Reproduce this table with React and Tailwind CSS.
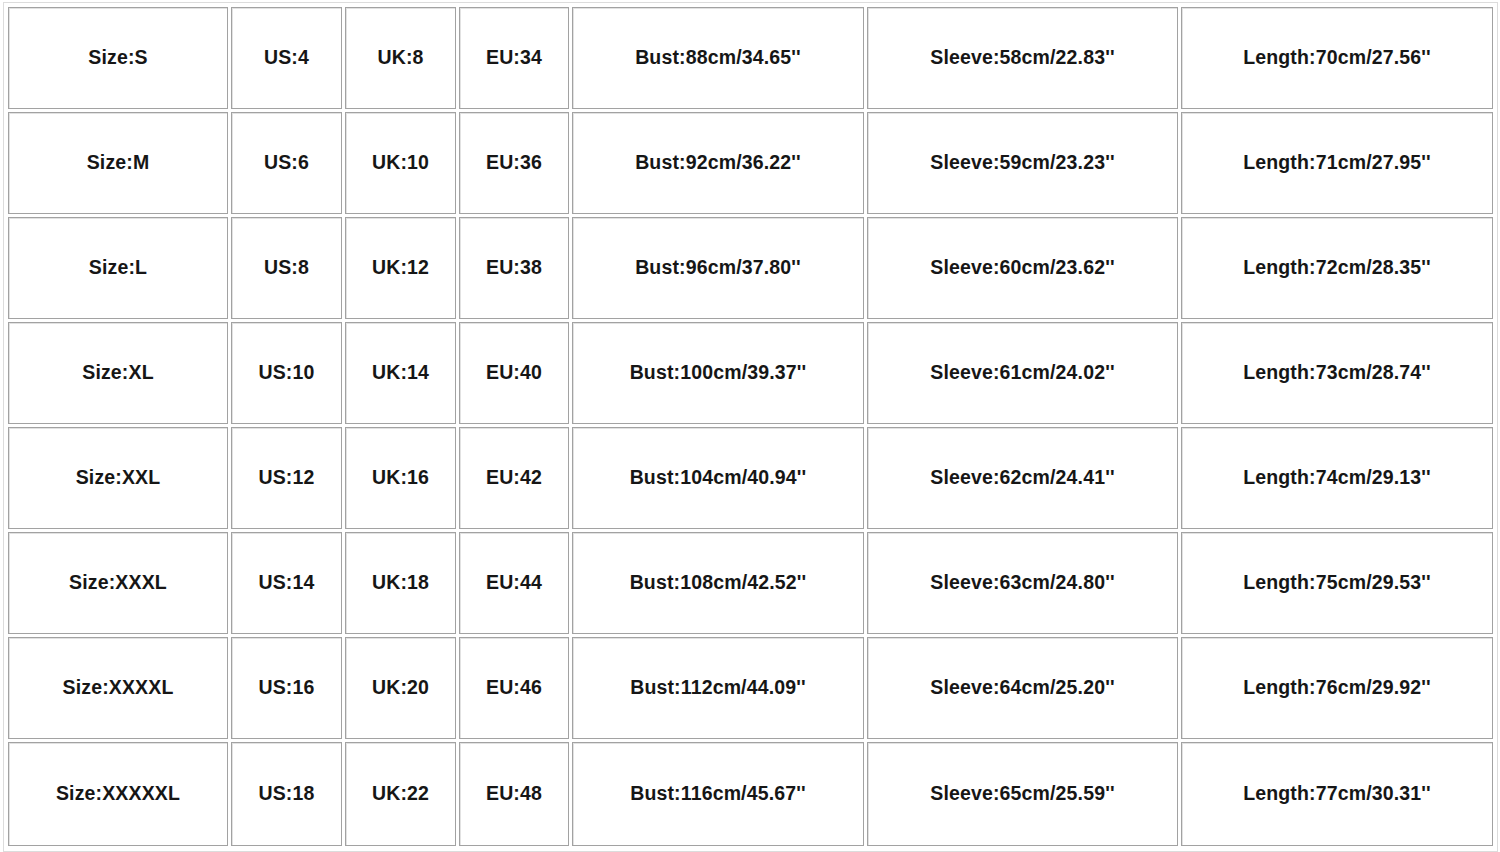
import React from "react";

// size chart rows: size, us, uk, eu, bust, sleeve, length
const rows = [
  ["Size:S", "US:4", "UK:8", "EU:34", "Bust:88cm/34.65''", "Sleeve:58cm/22.83''", "Length:70cm/27.56''"],
  ["Size:M", "US:6", "UK:10", "EU:36", "Bust:92cm/36.22''", "Sleeve:59cm/23.23''", "Length:71cm/27.95''"],
  ["Size:L", "US:8", "UK:12", "EU:38", "Bust:96cm/37.80''", "Sleeve:60cm/23.62''", "Length:72cm/28.35''"],
  ["Size:XL", "US:10", "UK:14", "EU:40", "Bust:100cm/39.37''", "Sleeve:61cm/24.02''", "Length:73cm/28.74''"],
  ["Size:XXL", "US:12", "UK:16", "EU:42", "Bust:104cm/40.94''", "Sleeve:62cm/24.41''", "Length:74cm/29.13''"],
  ["Size:XXXL", "US:14", "UK:18", "EU:44", "Bust:108cm/42.52''", "Sleeve:63cm/24.80''", "Length:75cm/29.53''"],
  ["Size:XXXXL", "US:16", "UK:20", "EU:46", "Bust:112cm/44.09''", "Sleeve:64cm/25.20''", "Length:76cm/29.92''"],
  ["Size:XXXXXL", "US:18", "UK:22", "EU:48", "Bust:116cm/45.67''", "Sleeve:65cm/25.59''", "Length:77cm/30.31''"],
];

const App = () => {
  return (
    <div className="w-[1500px] h-[852px] bg-white pl-[3px] pt-[2px] overflow-hidden">
      <div
        className="w-[1495px] h-[850px] border border-[#dcdcdc] pl-[4px] pt-[4px] text-[#161616]"
        style={{ fontFamily: '"Liberation Sans", Arial, sans-serif' }}
      >
        <div className="grid grid-cols-[220px_111px_111px_110px_292px_311px_312px] grid-rows-[repeat(7,102px)_104px] gap-[3px]">
          {rows.map((row, i) =>
            row.map((cell, j) => (
              <div
                key={i + "-" + j}
                className="flex items-center justify-center border border-[#a2a2a2] shadow-[inset_1px_1px_0_#e2e2e2] text-[19.5px] font-bold tracking-[0.15px]"
              >
                {cell}
              </div>
            ))
          )}
        </div>
      </div>
    </div>
  );
};

export default App;
